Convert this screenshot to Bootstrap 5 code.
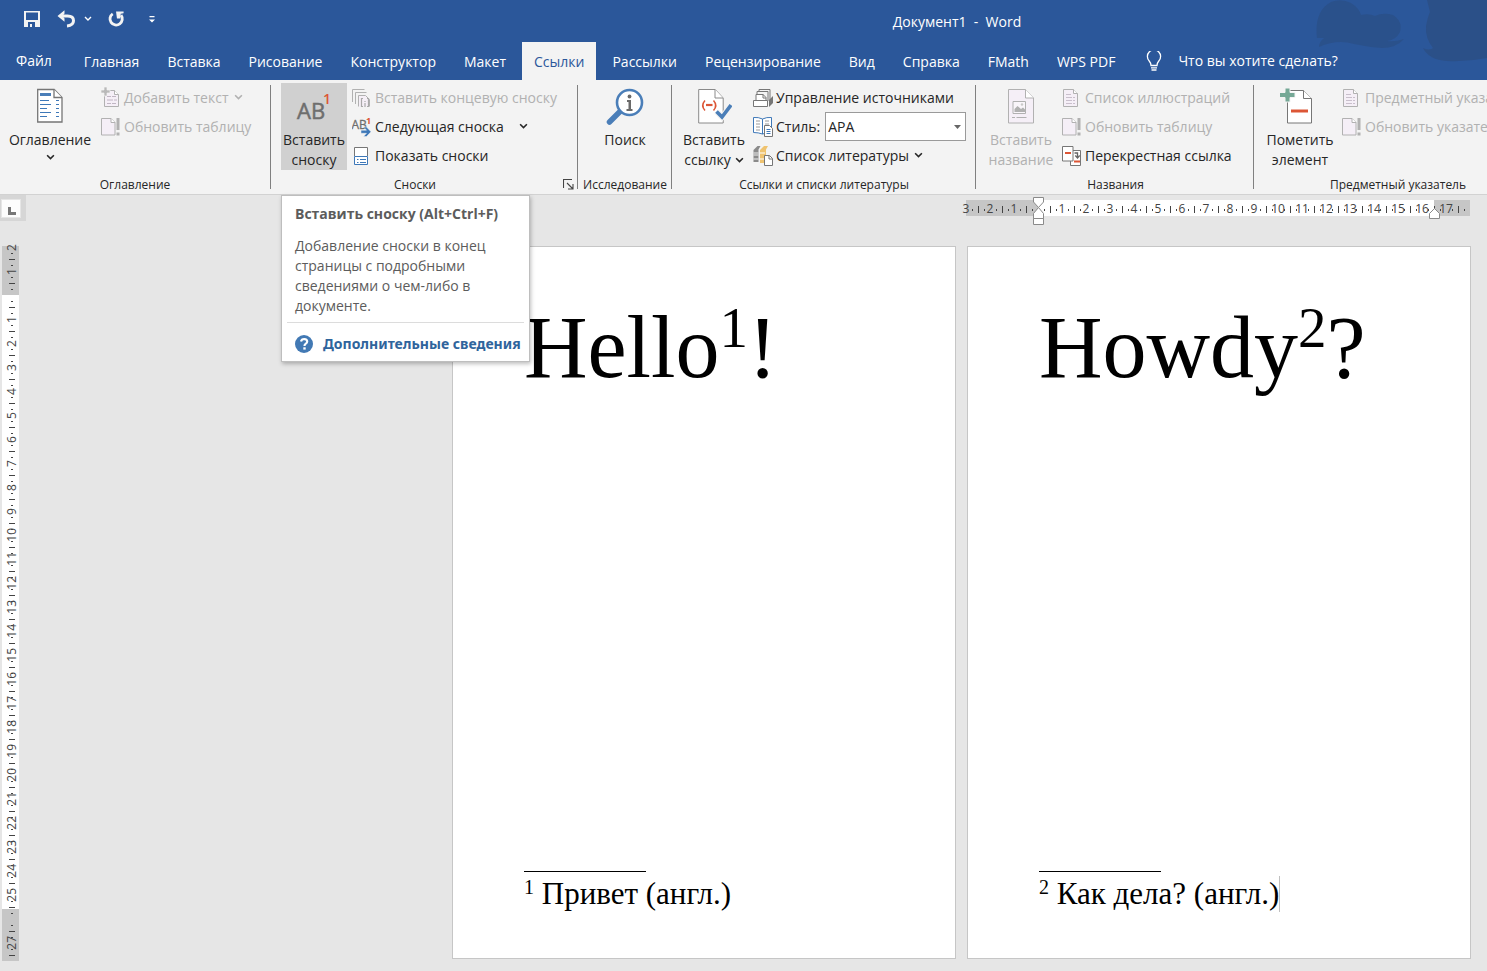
<!DOCTYPE html>
<html lang="ru">
<head>
<meta charset="utf-8">
<meta name="viewport" content="width=device-width, initial-scale=1">
<title>Документ1 - Word</title>
<link href="https://cdn.jsdelivr.net/npm/bootstrap@5.3.0/dist/css/bootstrap.min.css" rel="stylesheet">
<style>
:root { --word-blue:#2b579a; --ink:#262626; --off:#b1b1b1; }
body { font-family:"Open Sans","Noto Sans",sans-serif; font-size:14px; line-height:20px; color:var(--ink); background:#e6e6e6; overflow-x:hidden; }
svg { display:block; flex:none; }
button { font:inherit; color:inherit; background:none; border:0; padding:0; }
button:disabled { color:var(--off); }
.word-head { background:var(--word-blue); color:#fff; }
.title-row { height:42px; padding-left:24px; }
.doc-title { padding-left:272px; padding-top:2px; white-space:pre; }
.head-art { right:0; top:0; }
.tab-row { height:38px; }
.tab-row a { color:#fff; text-decoration:none; padding:10px 12px 8px; white-space:nowrap; }
.tab-row .nav { gap:4px; }
.tab-row .file-tab { padding:9px 16px; margin-right:4px; }
.tab-row a.active { background:#f3f3f3; color:var(--word-blue); }
.ask { margin-left:19px; gap:16px; }
.ribbon { background:#f3f3f3; border-bottom:1px solid #d2d2d2; overflow:hidden; height:115px; }
.rgroup { flex:none; position:relative; padding-top:3px; }
.rgroup::after { content:""; position:absolute; right:0; top:5px; bottom:5px; border-right:1px solid #808080; }
.rgroup:last-child::after { display:none; }
.rbody { height:87px; }
.rlabel { font-size:12px; line-height:18px; text-align:center; padding-top:6px; white-space:nowrap; }
.g-toc { width:271px; padding-left:7px; }
.g-notes { width:307px; padding-left:10px; }
.g-find { width:94px; }
.g-cite { width:304px; padding-left:8px; }
.g-names { width:278px; padding-left:9px; }
.g-index { width:288px; padding-left:8px; }
.g-toc .rlabel, .g-notes .rlabel, .g-cite .rlabel, .g-names .rlabel, .g-index .rlabel { margin-left:-8px; }
.big-btn { height:87px; display:flex; flex-direction:column; align-items:center; padding-top:5px; white-space:nowrap; margin-right:5px; }
.big-btn svg.pic { margin-bottom:4px; }
.big-btn.pressed { background:#d0d0d0; }
.w66 { width:66px; } .w72 { width:72px; } .w76 { width:76px; } .w86 { width:86px; } .w68 { width:68px; }
.srow { height:29px; display:flex; align-items:center; gap:3px; white-space:nowrap; }
.srow .chev { margin-left:2px; }
.style-box { width:141px; position:relative; margin-left:2px; }
.style-box select { appearance:none; width:100%; height:29px; border:1px solid #9a9a9a; border-radius:0; background:#fff; padding:0 2px; color:#262626; }
.style-box svg { position:absolute; right:5px; top:13px; pointer-events:none; }
.launch { padding:4px 4px 0 6px; }
.desk { position:relative; }
.corner { width:26px; height:26px; background:#d6d6d6; padding:4px 0 0 1px; }
.corner span { width:20px; height:19px; background:#fdfdfd; border:1px solid #e6e6e6; }
.rule { font-size:12px; line-height:16px; color:#444; }
.rule .cell { flex:none; display:flex; align-items:center; justify-content:center; }
.rule-h { width:516px; height:16px; margin:5px 17px 0 auto; background:linear-gradient(90deg,transparent 12px,#c6c6c6 12px 84px,#fff 84px 480px,#c6c6c6 480px); }
.rule-h .cells { overflow:hidden; height:18px; }
.rule-h .cell { width:24px; height:18px; background:linear-gradient(#444,#444) 0 6px/1px 7px no-repeat,linear-gradient(#444,#444) 6px 9px/1px 2px no-repeat,linear-gradient(#444,#444) 18px 9px/1px 2px no-repeat; }
.rule-v { width:17px; height:726px; margin:14px 0 0 2px; overflow:hidden; background:linear-gradient(transparent 11px,#c6c6c6 11px 60px,#fff 60px 674px,#c6c6c6 674px); }
.rule-v .cell { height:24px; background:linear-gradient(#444,#444) 7px 0/6px 1px no-repeat,linear-gradient(#444,#444) 9px 6px/2px 1px no-repeat,linear-gradient(#444,#444) 9px 18px/2px 1px no-repeat; }
.rule-h .cell:first-child { background:linear-gradient(#444,#444) 18px 9px/1px 2px no-repeat; }
.rule-v .cell:first-child { background:linear-gradient(#444,#444) 9px 18px/2px 1px no-repeat; }
.rule-v .cell { padding-left:2px; }
.rule-v .cell span { writing-mode:vertical-rl; transform:rotate(180deg); }
.mark-pin { position:absolute; top:-5px; }
.pages { gap:11px; padding:30px 16px 12px 0; }
.sheet { width:504px; min-height:713px; background:#fff; border:1px solid #c6c6c6; padding:51px 60px 46px 71px; font-family:"Liberation Serif",serif; color:#000; white-space:nowrap; }
.sheet p { margin:0; }
.huge { font-size:88px; line-height:100px; }
.huge sup { font-size:57px; top:-30px; }
.note { font-size:31px; line-height:36px; }
.note::before { content:""; display:block; width:122px; border-top:1px solid #000; margin-bottom:4px; }
.note sup { font-size:20px; }
.note .caret { border-right:1px solid #c0c0c0; padding-bottom:1px; }
.tipbox { position:absolute; left:281px; top:0; width:249px; background:#fff; border:1px solid #bebebe; box-shadow:1px 2px 4px rgba(0,0,0,.25); font-family:"Noto Sans","Open Sans",sans-serif; color:#5c5c5c; padding:8px 5px 7px; }
.tipbox h6 { font-family:"Open Sans",sans-serif; font-size:14px; line-height:20px; font-weight:700; margin:0 8px 12px; white-space:nowrap; }
.tipbox p { margin:0 24px 6px 8px; font-family:"Open Sans",sans-serif; }
.tipbox .more { border-top:1px solid #dcdcdc; padding:11px 0 0 8px; gap:10px; }
.tipbox a { font-weight:700; color:#2f649c; text-decoration:none; white-space:nowrap; }
</style>
</head>
<body>
<svg width="0" height="0" class="position-absolute">
  <defs>
    <symbol id="chev" viewBox="0 0 8 6"><path d="M1 1l3 3 3-3" fill="none" stroke="currentColor" stroke-width="1.4"/></symbol>
    <symbol id="refresh" viewBox="0 0 20 20"><path d="M.5 1.500h9.500l4 4v12.500h-13.500z" fill="#f5eff7" stroke="#b1b1b1"/><path d="M10 1.500v4h4" fill="#fff" stroke="#b1b1b1"/><path d="M15.500 1h3v12h-3zM15.500 15.500h3v3h-3z" fill="#b1b1b1"/></symbol>
    <symbol id="listdoc" viewBox="0 0 20 20"><path d="M1.500 1.500h10l4 4v13h-14z" fill="#f5eff7" stroke="#b1b1b1"/><path d="M11.500 1.500v4h4" fill="#fff" stroke="#b1b1b1"/><path d="M4 6.500h5M4 9.500h6M11 9.500h2M4 12.500h6M11 12.500h2M4 15.500h6M11 15.500h2" stroke="#c9bfcc"/></symbol>
  </defs>
</svg>

<header class="word-head position-relative">
  <svg class="head-art position-absolute" width="190" height="80" viewBox="0 0 190 80"><g fill="#2b4f85"><path opacity=".75" d="M20 38C18 22 22 8 34 2q10-4 20 1 8 5 10 12 8-2 14 1 8-4 18-1 10 6 7 17-4 8-13 9 8 1 17-2-8 9-22 9-14-1-28-4-17-5-35 3 0-5 5-9z"/><path d="M130 0h60v58q-20 4-40 3-18-1-24-13 6 3 10 0-8-10-7-22 2-10 4-14z" opacity=".85"/></g></svg>
  <div class="title-row d-flex align-items-center position-relative">
    <div class="d-flex align-items-center pb-1">
      <button aria-label="Сохранить"><svg width="16" height="16" viewBox="0 0 16 16"><path d="M0 0h16v16H0zM2 1.500v7.500h12V1.500zM4 11v5h2v-3h2v3h3v-5z" fill="#f3f3f3" fill-rule="evenodd"/></svg></button>
      <button aria-label="Отменить" class="ms-3"><svg width="20" height="18" viewBox="0 0 20 18"><path d="M5 6h6.500q6 0 6 4.800 0 4.700-6.500 5.200" fill="none" stroke="#f3f3f3" stroke-width="3"/><path d="M1.500 6l7-5.800v3.300L6.500 6l2 2.500v3.300z" fill="#f3f3f3"/></svg></button>
      <button aria-label="Варианты отмены" class="ms-2"><svg width="8" height="6"><use href="#chev"/></svg></button>
      <button aria-label="Повторить" class="ms-3 pe-1"><svg width="17" height="18" viewBox="0 0 18 18"><path d="M5 3.500A6.500 6.500 0 1 0 13.800 5" fill="none" stroke="#f3f3f3" stroke-width="3"/><path d="M8.500 1h8v1.800l-3 .7-.5 5H9.500z" fill="#f3f3f3"/></svg></button>
      <button aria-label="Настройка панели быстрого доступа" class="ms-3 ps-1"><svg width="6" height="7" viewBox="0 0 6 7"><path d="M.5 0h5v1.200h-5zM0 3.500h6L3 6.500z" fill="#fff"/></svg></button>
    </div>
    <div class="doc-title flex-grow-1 text-center">Документ1  -  Word</div>
  </div>
  <div class="tab-row d-flex position-relative">
    <a href="#" class="file-tab">Файл</a>
    <nav class="nav flex-nowrap">
      <a href="#">Главная</a><a href="#">Вставка</a><a href="#">Рисование</a><a href="#">Конструктор</a><a href="#">Макет</a><a href="#" class="active">Ссылки</a><a href="#">Рассылки</a><a href="#">Рецензирование</a><a href="#">Вид</a><a href="#">Справка</a><a href="#">FMath</a><a href="#">WPS PDF</a>
    </nav>
    <button class="ask d-flex align-items-center"><svg width="16" height="21" viewBox="0 0 16 21"><path d="M5 14.500q0-2.500-1.800-4.500a6.600 6.600 0 1 1 9.600 0Q11 12 11 14.500z" fill="none" stroke="#fff" stroke-width="1.300"/><path d="M5 16.800h6M5.500 19h5" stroke="#fff" stroke-width="1.300"/></svg><span>Что вы хотите сделать?</span></button>
  </div>
</header>

<section class="ribbon d-flex">
  <div class="rgroup g-toc">
    <div class="rbody d-flex">
      <button class="big-btn w86 me-2"><svg class="pic" width="26" height="38" viewBox="0 0 26 38"><path d="M.7 1.500h16.500l7.800 8v24.500H.7z" fill="#fff" stroke="#767676" stroke-width="1.300"/><path d="M17 1.500v8h8" fill="#fff" stroke="#767676" stroke-width="1.300"/><path d="M3 5h11v3H3z" fill="#4a7eb8"/><path d="M3 12.500h9M19 12.500h3M3 16.500h11M19 16.500h3M3 20.500h7M19 20.500h3M3 24.500h11M19 24.500h3M3 28.500h7M19 28.500h3" stroke="#3e78b8" stroke-width="1.200"/></svg>Оглавление<svg class="mt-1" width="9" height="7"><use href="#chev"/></svg></button>
      <div>
        <button class="srow" disabled><svg width="20" height="22" viewBox="0 0 20 22"><path d="M3.500 3.500h10l4 4v12h-14z" fill="#f5eff7" stroke="#b1b1b1"/><path d="M13.500 3.500v4h4" fill="#fff" stroke="#b1b1b1"/><path d="M6 9.500h4M11 9.500h4M6 13h6M13 13h3M6 16.500h4M11 16.500h4" stroke="#c0b6c3"/><path d="M3 0h3v3h3v3H6v3H3V6H0V3h3z" fill="#b9b9b9" stroke="#f3f3f3" stroke-width=".7"/></svg>Добавить текст<svg class="chev" width="9" height="7"><use href="#chev"/></svg></button>
        <button class="srow" disabled><svg width="20" height="20"><use href="#refresh"/></svg>Обновить таблицу</button>
      </div>
    </div>
    <div class="rlabel">Оглавление</div>
  </div>

  <div class="rgroup g-notes">
    <div class="rbody d-flex">
      <button class="big-btn pressed w66"><svg class="pic" width="40" height="38" viewBox="0 0 40 38"><text x="3" y="31" font-family="Open Sans" font-size="22" fill="#6e6e6e" stroke="#6e6e6e" stroke-width=".5">AB</text><text x="29" y="16" font-family="Open Sans" font-size="14" font-weight="600" fill="#dc5636">1</text></svg>Вставить<br><span>сноску</span></button>
      <div>
        <button class="srow" disabled><svg width="20" height="20" viewBox="0 0 20 20"><path d="M.5 14V1.500h12M3.500 16V4.500h11" fill="none" stroke="#b1b1b1"/><path d="M6.500 18.500v-11h7l4 4v7" fill="#f5eff7" stroke="#b1b1b1"/><path d="M11 10.500h-1.500v8H11M15 10.500h1.500v8H15M13 13v1M13 15v4" fill="none" stroke="#a9a9a9" stroke-width="1.200"/></svg>Вставить концевую сноску</button>
        <button class="srow"><svg width="20" height="22" viewBox="0 0 20 22"><text x="-.5" y="13" font-family="Open Sans" font-size="12" fill="#6e6e6e" stroke="#6e6e6e" stroke-width=".3">AB</text><text x="14" y="8" font-family="Open Sans" font-size="9" font-weight="700" fill="#dc5636">1</text><path d="M9 14.200h5.500l-3-3.200h3l4.500 4.800-4.500 4.700h-3l3-3.200H9z" fill="#3e78b8" stroke="#f3f3f3" stroke-width=".5"/></svg>Следующая сноска<svg class="chev ms-2 ps-1" width="13" height="7"><use href="#chev" width="9" height="7"/></svg></button>
        <button class="srow"><svg width="20" height="20" viewBox="0 0 20 20"><path d="M2.500 10V1.500h13V10" fill="#fff" stroke="#767676"/><path d="M2.500 10.500h13v8h-13z" fill="#fff" stroke="#3e78b8"/><path d="M5 13.500h1.500M8 13.500h6M5 16.500h1.500M8 16.500h6" stroke="#3e78b8"/></svg>Показать сноски</button>
      </div>
    </div>
    <div class="d-flex"><div class="rlabel flex-grow-1">Сноски</div><button class="launch" aria-label="Параметры сносок"><svg width="11" height="11" viewBox="0 0 11 11"><path d="M.5 9V.5H9M4 4l5.500 5.500M10 5v5H5" fill="none" stroke="#444" stroke-width="1.100"/></svg></button></div>
  </div>

  <div class="rgroup g-find">
    <div class="rbody d-flex justify-content-center">
      <button class="big-btn w68 me-0"><svg class="pic" width="38" height="38" viewBox="0 0 38 38"><path d="M3.500 34L15 22.500" stroke="#4a7eb8" stroke-width="5.500" stroke-linecap="round"/><circle cx="23.500" cy="14.500" r="12.500" fill="#fff" stroke="#4a7eb8" stroke-width="2.600"/><circle cx="23.500" cy="8.500" r="1.900" fill="#6a6a6a"/><path d="M21 12h4v9h1.500v2h-6v-2h2v-7h-1.500z" fill="#6a6a6a"/></svg>Поиск</button>
    </div>
    <div class="rlabel">Исследование</div>
  </div>

  <div class="rgroup g-cite">
    <div class="rbody d-flex">
      <button class="big-btn w68"><svg class="pic" width="36" height="38" viewBox="0 0 36 38"><path d="M2.700 1.500h16.500l8 8.500v25H2.700z" fill="#fff" stroke="#8a8a8a"/><path d="M19 1.500v8.500h8" fill="#fff" stroke="#8a8a8a"/><path d="M9 12.500q-4.500 5 0 10M17.500 12.500q4.500 5 0 10" fill="none" stroke="#dc5636" stroke-width="1.500"/><path d="M10 17h6.500" stroke="#dc5636" stroke-width="2.200"/><path d="M20.500 23.500l5.500 5.500 10-12" fill="none" stroke="#f3f3f3" stroke-width="6"/><path d="M20.500 23.500l5.500 5.500 9-12" fill="none" stroke="#4a7eb8" stroke-width="3.600"/></svg>Вставить<span class="d-flex align-items-center">ссылку<svg class="ms-1" width="9" height="7"><use href="#chev"/></svg></span></button>
      <div>
        <button class="srow"><svg width="20" height="20" viewBox="0 0 20 20"><path d="M6 3.500V1.500h11V13M4 6V3.500h11V13" fill="none" stroke="#767676"/><path d="M3 13V6.500h7l3 3V13" fill="#fff" stroke="#767676"/><path d="M10 6v4h3" fill="none" stroke="#767676"/><path d="M.5 12.500h14v6H.5z" fill="#fff" stroke="#767676"/><path d="M16 12l4-4v7l-4 4z" fill="#767676"/></svg>Управление источниками</button>
        <div class="srow"><svg width="20" height="22" viewBox="0 0 20 22"><path d="M9.500 3q-4-2-9-1.500v15q5 0 9 1.500 4-1.500 9-1.500v-15q-5-.5-9 1.500zv15" fill="#fff" stroke="#3e78b8"/><path d="M9.500 3v15" stroke="#3e78b8"/><path d="M3 5h4M3 8h4M3 11h4M3 14h4M12 5h4M12 8h4" stroke="#9a9a9a"/><path d="M11.500 9.500h5l3 3v8h-8z" fill="#fff" stroke="#767676"/><path d="M13.500 13.500h4M13.500 15.500h4M13.500 17.500h4" stroke="#3e78b8"/></svg><label for="cite-style">Стиль:</label><div class="style-box"><select id="cite-style"><option>APA</option></select><svg width="7" height="4" viewBox="0 0 7 4"><path d="M0 0h7L3.500 4z" fill="#666"/></svg></div></div>
        <button class="srow"><svg width="20" height="20" viewBox="0 0 20 20"><path d="M.5 4l4-4h3l-2 3.500V16h-5z" fill="#8a8a8a"/><path d="M.5 7h5M.5 9h5M.5 13h5" stroke="#eee"/><path d="M7 4l4-4h4l-2 3.500V17H7z" fill="#efc36f"/><path d="M7 7h5M7 13h5" stroke="#fff"/><path d="M11.500 9.500h5l3 3v7h-8z" fill="#fff" stroke="#767676"/><path d="M16 9.500v3.500h3.500" fill="none" stroke="#767676"/></svg>Список литературы<svg class="chev" width="9" height="7"><use href="#chev"/></svg></button>
      </div>
    </div>
    <div class="rlabel">Ссылки и списки литературы</div>
  </div>

  <div class="rgroup g-names">
    <div class="rbody d-flex">
      <button class="big-btn w72" disabled><svg class="pic" width="26" height="38" viewBox="0 0 26 38"><path d="M.5 1.500h17l8 8.500v25H.5z" fill="#f5eff7" stroke="#b1b1b1"/><path d="M17.500 1.500v8.500h8" fill="#fff" stroke="#b1b1b1"/><path d="M5 13.500h12.500v12H5z" fill="#f9f5fa" stroke="#b1b1b1"/><path d="M6.500 24v-3l3-3 3.500 3 2-1.500 2 2V24z" fill="#b1b1b1"/><circle cx="14" cy="16.500" r="1.200" fill="#c9c9c9"/><path d="M4 29.500h3M8.500 29.500h10" stroke="#b1b1b1"/></svg>Вставить<br><span>название</span></button>
      <div>
        <button class="srow" disabled><svg width="20" height="20"><use href="#listdoc"/></svg>Список иллюстраций</button>
        <button class="srow" disabled><svg width="20" height="20"><use href="#refresh"/></svg>Обновить таблицу</button>
        <button class="srow"><svg width="20" height="20" viewBox="0 0 20 20"><path d="M8.500 4.500h10v15h-10z" fill="#fff" stroke="#767676"/><path d="M.5.5h10.500v14.500H.5z" fill="#fff" stroke="#767676"/><path d="M3 7h6M12 15.500h6" stroke="#dc5636" stroke-width="2"/><path d="M12.500 7h3v4.500M13.300 9.500l2.200 2.500 2.200-2.500" fill="none" stroke="#666" stroke-width="1.300"/></svg>Перекрестная ссылка</button>
      </div>
    </div>
    <div class="rlabel">Названия</div>
  </div>

  <div class="rgroup g-index">
    <div class="rbody d-flex">
      <button class="big-btn w76 me-1"><svg class="pic" width="40" height="38" viewBox="0 0 40 38"><path d="M7.500 2.500h16l8 8v24.500h-24z" fill="#fff" stroke="#767676"/><path d="M23.500 2.500v8h8" fill="#fff" stroke="#767676"/><path d="M5 0h5v4.500h5v5h-5V14H5V9.500H-.5v-5H5z" fill="#75a896" stroke="#f3f3f3"/><path d="M11 23h17" stroke="#dc5636" stroke-width="3"/></svg>Пометить<br><span>элемент</span></button>
      <div>
        <button class="srow" disabled><svg width="20" height="20"><use href="#listdoc"/></svg>Предметный указатель</button>
        <button class="srow" disabled><svg width="20" height="20"><use href="#refresh"/></svg>Обновить указатель</button>
      </div>
    </div>
    <div class="rlabel">Предметный указатель</div>
  </div>
</section>

<main class="desk d-flex">
  <aside>
    <div class="corner"><span class="d-block"><svg width="18" height="17" viewBox="0 0 18 17"><path d="M7.500 7v6.500H14" fill="none" stroke="#777" stroke-width="3"/></svg></span></div>
    <div class="rule rule-v" id="ruler-v"></div>
  </aside>
  <div class="flex-grow-1">
    <div class="rule rule-h position-relative">
      <div class="cells d-flex" id="ruler-h"></div>
      <svg class="mark-pin" style="left:78px" width="13" height="30" viewBox="0 0 13 30"><g fill="#fff" stroke="#8a8a8a"><path d="M1.500 2.500h10v4.500l-5 5.500-5-5.500z"/><path d="M1.500 23.500v-5l5-6 5 6v5zM1.500 23.500h10v6h-10z"/></g></svg>
      <svg class="mark-pin" style="left:474px" width="13" height="25" viewBox="0 0 13 25"><path d="M1.500 23.500v-5l5-5 5 5v5z" fill="#fff" stroke="#8a8a8a"/></svg>
    </div>
    <div class="pages d-flex justify-content-end">
      <article class="sheet d-flex flex-column">
        <p class="huge">Hello<sup>1</sup>!</p>
        <p class="note mt-auto"><sup>1</sup> Привет (англ.)</p>
      </article>
      <article class="sheet d-flex flex-column">
        <p class="huge">Howdy<sup>2</sup>?</p>
        <p class="note mt-auto"><sup>2</sup> <span class="caret">Как дела? (англ.)</span></p>
      </article>
    </div>
  </div>
  <div class="tipbox" role="tooltip">
    <h6>Вставить сноску (Alt+Ctrl+F)</h6>
    <p>Добавление сноски в конец страницы с подробными сведениями о чем-либо в документе.</p>
    <div class="more d-flex align-items-center"><svg width="18" height="18" viewBox="0 0 18 18"><circle cx="9" cy="9" r="9" fill="#4279b4"/><path d="M6 6.500Q6.500 4 9.200 4q3 .1 3 2.600 0 1.400-1.600 2.300Q9.500 9.600 9.500 11" fill="none" stroke="#fff" stroke-width="2.200"/><path d="M8.300 12.300h2.400v2.300H8.300z" fill="#fff"/></svg><a href="#">Дополнительные сведения</a></div>
  </div>
</main>

<script src="https://cdn.jsdelivr.net/npm/bootstrap@5.3.0/dist/js/bootstrap.bundle.min.js"></script>
<script>
function fillRuler(id, from, to, blanks) {
  const box = document.getElementById(id);
  for (let n = from; n <= to; n++) {
    const cell = document.createElement('div');
    cell.className = 'cell';
    if (!blanks.includes(n)) {
      const num = document.createElement('span');
      num.textContent = Math.abs(n);
      cell.append(num);
    }
    box.append(cell);
  }
}
fillRuler('ruler-h', -3, 18, [0, 18]);
fillRuler('ruler-v', -2, 28, [0, 26, 28]);
</script>
</body>
</html>
